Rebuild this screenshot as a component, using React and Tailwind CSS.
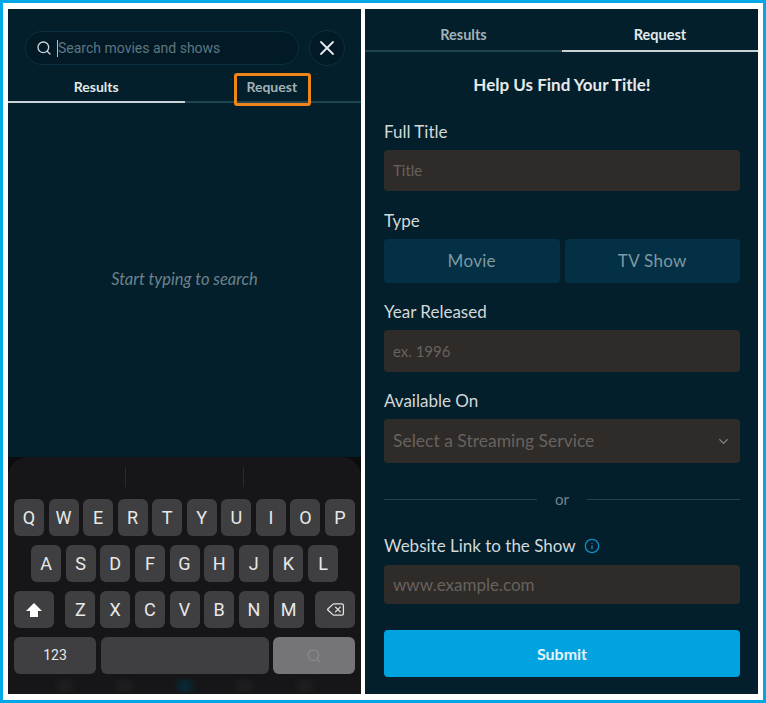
import React from 'react';
import { Search, X, ChevronDown, Info, Delete } from 'lucide-react';

const rows = ['QWERTYUIOP', 'ASDFGHJKL', 'ZXCVBNM'];

const keyCls = 'bg-[#3f3f41] rounded-[6px] h-[37px] flex items-center justify-center text-[#e8e8e8] font-["Roboto",sans-serif]';
const field = 'bg-[#2f2b28] rounded-[4px] flex items-center px-[9px] text-[#67625f]';
const label = 'text-[17px] leading-[20px] text-[#d3d8da]';

function Key({ c }) {
  return <div className={`${keyCls} w-[30px] text-[18px]`}>{c}</div>;
}

function Keyboard() {
  return (
    <div className="relative flex-1 bg-[#0c0c0e]">
      <div className="absolute inset-0 rounded-t-[20px] bg-[#161618] px-[6px]">
        <div className="flex justify-center gap-[117px] pt-[10px] h-[42px]">
          <div className="w-px h-[20px] bg-[#2a2a2c]" />
          <div className="w-px h-[20px] bg-[#2a2a2c]" />
        </div>
        <div className="flex justify-between">
          {rows[0].split('').map((c) => <Key key={c} c={c} />)}
        </div>
        <div className="flex justify-between mt-[9px] px-[17px]">
          {rows[1].split('').map((c) => <Key key={c} c={c} />)}
        </div>
        <div className="flex justify-between mt-[9px]">
          <div className={`${keyCls} w-[40px]`}>
            <svg width="18" height="16" viewBox="0 0 18 16"><path d="M9 1 L17 9 H13 V15 H5 V9 H1 Z" fill="#fff" /></svg>
          </div>
          <div className="flex gap-[4.7px]">
            {rows[2].split('').map((c) => <Key key={c} c={c} />)}
          </div>
          <div className={`${keyCls} w-[40px]`}>
            <Delete size={19} strokeWidth={1.6} className="text-[#e4e4e4]" />
          </div>
        </div>
        <div className="flex gap-[4.5px] mt-[9px]">
          <div className={`${keyCls} w-[82px] text-[14px]`}>123</div>
          <div className={`${keyCls} flex-1`} />
          <div className="w-[82px] h-[37px] rounded-[6px] bg-[#757577] flex items-center justify-center">
            <Search size={16} className="text-[#88888a]" />
          </div>
        </div>
        <div className="flex justify-center gap-[44px] mt-[5px] overflow-hidden">
          <div className="w-[16px] h-[14px] rounded-full bg-[#1f1f21] blur-[3px]" />
          <div className="w-[16px] h-[14px] rounded-full bg-[#1f1f21] blur-[3px]" />
          <div className="w-[16px] h-[14px] rounded-full bg-[#082a38] blur-[3px]" />
          <div className="w-[16px] h-[14px] rounded-full bg-[#1f1f21] blur-[3px]" />
          <div className="w-[16px] h-[14px] rounded-full bg-[#1f1f21] blur-[3px]" />
        </div>
      </div>
    </div>
  );
}

function LeftPanel() {
  return (
    <div className="w-[353px] bg-[#021f2b] flex flex-col">
      <div className="flex items-center gap-[10px] pl-[17px] pt-[21px]">
        <div className="w-[274px] h-[34px] rounded-full bg-[#021a26] border border-[#0a2f40] flex items-center pl-[10px]">
          <Search size={16} strokeWidth={2} className="text-[#cfd6d9]" />
          <div className="w-px h-[17px] bg-[#b5bfc4] ml-[5px]" />
          <span className="font-['Roboto',sans-serif] text-[14px] text-[#5f7680]">Search movies and shows</span>
        </div>
        <div className="w-[36px] h-[36px] rounded-full bg-[#021a26] border border-[#0e3040] flex items-center justify-center">
          <X size={24} strokeWidth={1.8} className="text-[#e6eaec]" />
        </div>
      </div>
      <div className="flex mt-[8px] h-[29px] font-['Lato',sans-serif] text-[14px] font-bold">
        <div className="w-1/2 border-b-2 border-[#c9d3d6] flex items-center justify-center text-[#e3e8ea] pb-[2px]">Results</div>
        <div className="relative w-1/2 border-b-2 border-[#1f4452] flex items-center justify-center text-[#a3b1b7] pb-[2px]">
          <span className="relative left-[-1px]">Request</span>
          <div className="absolute left-[49px] top-[-1px] w-[77px] h-[33px] border-[3px] border-[#f0861a] rounded-[3px]" />
        </div>
      </div>
      <div className="h-[354px] flex items-center justify-center pb-[1px] font-['Lato',sans-serif] italic text-[16.5px] text-[#6d828b]">
        Start typing to search
      </div>
      <Keyboard />
    </div>
  );
}

function RightPanel() {
  return (
    <div className="w-[393px] bg-[#021f2b] flex flex-col font-['Lato',sans-serif]">
      <div className="flex h-[43px] text-[14.5px] font-bold">
        <div className="w-[197px] border-b-2 border-[#1f4452] flex items-center justify-center text-[#a3b1b7] pt-[10px]">Results</div>
        <div className="flex-1 border-b-2 border-[#c9d3d6] flex items-center justify-center text-[#e3e8ea] pt-[10px]">Request</div>
      </div>
      <div className="pl-[19px] pr-[18px]">
        <h1 className="mt-[23px] text-center text-[17px] leading-[20px] font-bold text-[#e6eaec]">Help Us Find Your Title!</h1>
        <div className={`${label} mt-[27px]`}>Full Title</div>
        <div className={`${field} mt-[8px] h-[41px] text-[15px]`}>Title</div>
        <div className={`${label} mt-[20px]`}>Type</div>
        <div className="flex gap-[5px] mt-[8px]">
          <div className="flex-1 h-[44px] bg-[#033044] rounded-[4px] flex items-center justify-center text-[17px] text-[#7f98a3] tracking-[0.3px]">Movie</div>
          <div className="flex-1 h-[44px] bg-[#033044] rounded-[4px] flex items-center justify-center text-[17px] text-[#7f98a3] tracking-[0.3px]">TV Show</div>
        </div>
        <div className={`${label} mt-[19px]`}>Year Released</div>
        <div className={`${field} mt-[8px] h-[42px] text-[15px]`}>ex. 1996</div>
        <div className={`${label} mt-[19px]`}>Available On</div>
        <div className={`${field} mt-[8px] h-[44px] justify-between text-[17.5px] text-[#6b6663]`}>
          <span>Select a Streaming Service</span>
          <ChevronDown size={15} className="text-[#8a8a88]" />
        </div>
        <div className="flex items-center gap-[18px] mt-[26px] h-[20px]">
          <div className="flex-1 h-px bg-[#1f4452]" />
          <span className="text-[15px] text-[#73868e]">or</span>
          <div className="flex-1 h-px bg-[#1f4452]" />
        </div>
        <div className={`${label} mt-[27px] flex items-center gap-[8px]`}>
          <span>Website Link to the Show</span>
          <Info size={16} className="text-[#0f8fc9]" />
        </div>
        <div className={`${field} mt-[9px] h-[39px] text-[17px]`}>www.example.com</div>
        <button className="w-full h-[47px] mt-[26px] bg-[#00a3e0] rounded-[4px] text-[16px] font-bold text-[#e6f4fa]">Submit</button>
      </div>
    </div>
  );
}

export default function App() {
  return (
    <div className="w-[766px] h-[703px] border-[3px] border-[#00a8e8] bg-white flex gap-[4px] px-[5px] py-[6px]">
      <LeftPanel />
      <RightPanel />
    </div>
  );
}
